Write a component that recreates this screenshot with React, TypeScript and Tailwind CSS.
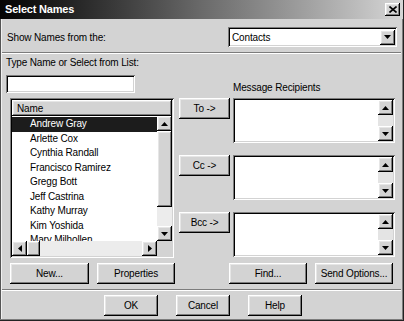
import React from 'react';

const raised =
  'shadow-[inset_-1px_-1px_#000,inset_1px_1px_#fff,inset_-2px_-2px_#7c7c7c,inset_2px_2px_#e6e6e6]';
const sunken =
  'shadow-[inset_1px_1px_#7c7c7c,inset_-1px_-1px_#fff,inset_2px_2px_#000,inset_-2px_-2px_#d3d3d3]';

const names = [
  'Andrew Gray',
  'Arlette Cox',
  'Cynthia Randall',
  'Francisco Ramirez',
  'Gregg Bott',
  'Jeff Castrina',
  'Kathy Murray',
  'Kim Yoshida',
  'Mary Milhollen',
];

type Dir = 'up' | 'down' | 'left' | 'right';

function Arrow({ dir }: { dir: Dir }) {
  if (dir === 'up' || dir === 'down') {
    return (
      <svg width="7" height="4" viewBox="0 0 7 4">
        <path d={dir === 'up' ? 'M0 4 L3.5 0 L7 4Z' : 'M0 0 L7 0 L3.5 4Z'} fill="#000" />
      </svg>
    );
  }
  return (
    <svg width="4" height="7" viewBox="0 0 4 7">
      <path d={dir === 'left' ? 'M4 0 L0 3.5 L4 7Z' : 'M0 0 L4 3.5 L0 7Z'} fill="#000" />
    </svg>
  );
}

function ScrollBtn({ dir }: { dir: Dir }) {
  return (
    <div className={`w-[15px] h-[15px] shrink-0 bg-[#d3d3d3] flex items-center justify-center ${raised}`}>
      <Arrow dir={dir} />
    </div>
  );
}

function Button({ label, className }: { label: string; className: string }) {
  return (
    <button className={`h-[21px] bg-[#d3d3d3] flex items-center justify-center ${raised} ${className}`}>
      {label}
    </button>
  );
}

function RecipientBox() {
  return (
    <div className={`w-[162px] h-[45px] p-[2px] bg-white flex ${sunken}`}>
      <div className="flex-1" />
      <div className="w-[15px] flex flex-col bg-[#e4e4e4]">
        <ScrollBtn dir="up" />
        <div className="flex-1" />
        <ScrollBtn dir="down" />
      </div>
    </div>
  );
}

export default function App() {
  return (
    <div className="w-[404px] h-[321px] overflow-hidden bg-[#d3d3d3] text-black text-[10px] tracking-[-0.15px] font-['Liberation_Sans',Arial,sans-serif] pl-[2px] pr-[3px] pb-[3px] shadow-[inset_-1px_-1px_#222,inset_-2px_-2px_#7c7c7c,inset_1px_0_#555,inset_2px_0_#f0f0f0]">
      {/* title bar */}
      <div className="h-[19px] -ml-[2px] -mr-[2px] pl-[5px] pr-[3px] flex items-center bg-gradient-to-r from-[#050505] via-[#6a6a6a] to-[#d6d6d6]">
        <span className="text-white font-bold text-[11px] tracking-[-0.2px]">Select Names</span>
        <div className={`ml-auto w-[15px] h-[13px] bg-[#d3d3d3] flex items-center justify-center ${raised}`}>
          <svg width="8" height="7" viewBox="0 0 8 7">
            <path d="M0.5 0.5 L7.5 6.5 M7.5 0.5 L0.5 6.5" stroke="#000" strokeWidth="1.6" />
          </svg>
        </div>
      </div>

      {/* show names row */}
      <div className="flex items-center pt-[8px]">
        <span className="ml-[5px]">Show Names from the:</span>
        <div className={`ml-auto mr-[4px] w-[169px] h-[20px] p-[2px] bg-white flex items-center ${sunken}`}>
          <span className="pl-[2px] flex-1">Contacts</span>
          <ScrollBtn dir="down" />
        </div>
      </div>

      <div className="mt-[5px] h-[2px] border-t border-t-[#7c7c7c] border-b border-b-white" />

      {/* main area */}
      <div className="flex">
        <div className="pl-[4px] flex flex-col">
          <div className="mt-[3px] h-[12px] leading-[12px]">Type Name or Select from List:</div>
          <div className={`mt-[6px] w-[129px] h-[18px] bg-white ${sunken}`} />
          <div className={`mt-[5px] ml-[4px] w-[164px] h-[160px] p-[2px] bg-white flex flex-col ${sunken}`}>
            <div className={`h-[16px] shrink-0 bg-[#d3d3d3] flex items-center pl-[5px] ${raised}`}>Name</div>
            <div className="flex h-[125px]">
              <div className="flex-1 overflow-hidden pt-[1px]">
                {names.map((n, i) => (
                  <div
                    key={n}
                    className={`h-[14.5px] leading-[14.5px] pl-[18px] whitespace-nowrap ${
                      i === 0 ? 'bg-[#1c1c1c] text-white' : ''
                    }`}
                  >
                    {n}
                  </div>
                ))}
              </div>
              <div className="w-[15px] flex flex-col bg-[#ececec]">
                <ScrollBtn dir="up" />
                <div className={`h-[76px] bg-[#d3d3d3] ${raised}`} />
                <div className="flex-1" />
                <ScrollBtn dir="down" />
              </div>
            </div>
            <div className="flex h-[15px]">
              <ScrollBtn dir="left" />
              <div className={`w-[13px] bg-[#d3d3d3] ${raised}`} />
              <div className="flex-1 bg-[#ececec]" />
              <ScrollBtn dir="right" />
              <div className="w-[15px] bg-[#d3d3d3]" />
            </div>
          </div>
        </div>

        <div className="ml-[5px] flex flex-col">
          <div className="mt-[28px] ml-[54px] h-[12px] leading-[12px]">Message Recipients</div>
          <div className="mt-[4px] flex flex-col gap-[12px]">
            {['To ->', 'Cc ->', 'Bcc ->'].map((l) => (
              <div key={l} className="flex items-start">
                <Button label={l} className="w-[51px] h-[20px]" />
                <div className="ml-[3px]">
                  <RecipientBox />
                </div>
              </div>
            ))}
          </div>
        </div>
      </div>

      {/* buttons row */}
      <div className="mt-[5px] flex">
        <Button label="New..." className="ml-[8px] w-[79px]" />
        <Button label="Properties" className="ml-[8px] w-[78px]" />
        <Button label="Find..." className="ml-[54px] w-[78px]" />
        <Button label="Send Options..." className="ml-[8px] w-[78px]" />
      </div>

      <div className="mt-[5px] h-[2px] border-t border-t-[#7c7c7c] border-b border-b-white" />

      <div className="mt-[4px] flex">
        <Button label="OK" className="ml-[102px] w-[54px]" />
        <Button label="Cancel" className="ml-[18px] w-[54px]" />
        <Button label="Help" className="ml-[18px] w-[54px]" />
      </div>
    </div>
  );
}
